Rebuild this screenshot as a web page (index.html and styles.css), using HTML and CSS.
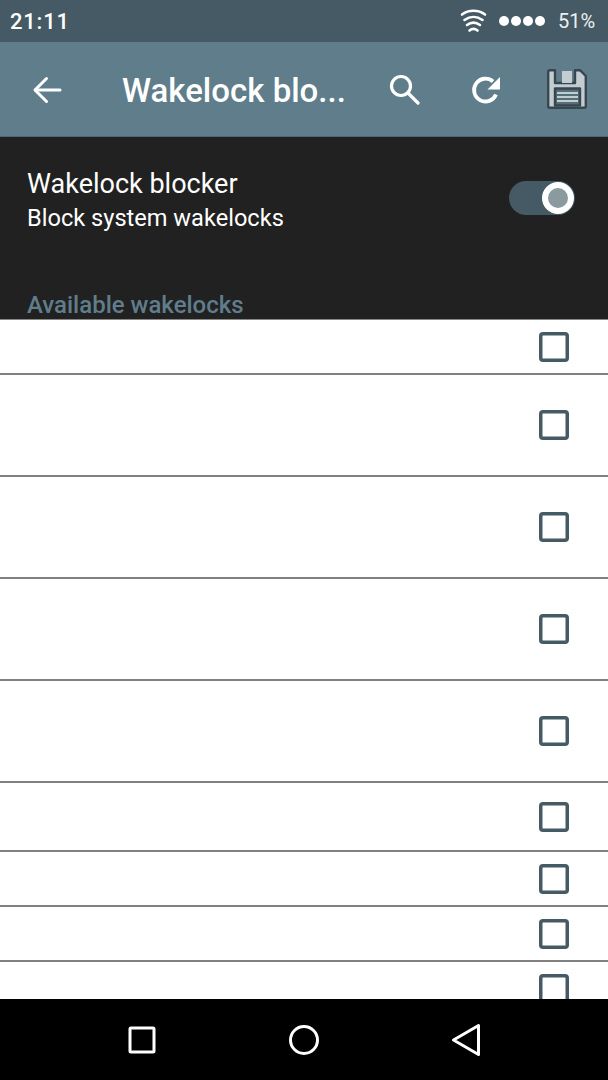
FILE: index.html
```html
<!DOCTYPE html>
<html lang="en">
<head>
	<meta charset="UTF-8">
	<title>Wakelock blocker</title>
	<link rel="stylesheet" href="styles.css">
</head>
<body>

<div id="wrapper">
	<div class="status_bar">
		<span class="clock">21:11</span>
		<svg class="wifi" width="27" height="24" viewBox="0 0 27 24" fill="none" stroke="#fff" stroke-width="2.6" stroke-linecap="round">
			<path d="M2 5.500C8.500 .5 18.500 .5 25 5.500"/>
			<path d="M4.500 11C10 7 17 7 22.500 11"/>
			<path d="M7 16C11 13 16 13 20 16"/>
			<path d="M9.500 21.500C12 19.500 15 19.500 17.500 21.500"/>
		</svg>
		<ul class="signal">
			<li></li>
			<li></li>
			<li></li>
			<li></li>
		</ul>
		<span class="battery">51%</span>
	</div>

	<div class="app_bar">
		<svg class="back" width="30" height="30" viewBox="0 0 30 30" fill="none" stroke="#fff" stroke-width="3" stroke-linecap="round" stroke-linejoin="round">
			<path d="M3.500 15H28"/>
			<path d="M14.500 3.500L3 15l11.500 11.500"/>
		</svg>
		<span class="title">Wakelock blo...</span>
		<svg class="search" width="32" height="32" viewBox="0 0 32 32" fill="none" stroke="#fff" stroke-width="3.200">
			<circle cx="13" cy="13" r="9.500"/>
			<path d="M20 20l10 10" stroke-linecap="round"/>
		</svg>
		<svg class="refresh" width="32" height="32" viewBox="0 0 32 32" fill="none">
			<path d="M26 20.500A11.400 11.400 0 1 1 23 7.500" stroke="#fff" stroke-width="3.800"/>
			<path d="M30 3V15.500H17.500z" fill="#fff"/>
		</svg>
		<svg class="save" width="40" height="40" viewBox="0 0 40 40" stroke="#37474f" stroke-width="2.400" stroke-linejoin="round">
			<path d="M2.500 1.200H8V14H28V1.200H33L38.800 7V37.300A1.500 1.500 0 0 1 37.300 38.800H2.700A1.500 1.500 0 0 1 1.200 37.300V2.500A1.500 1.500 0 0 1 2.500 1.200z" fill="#c3ccd0"/>
			<rect x="15" y="2" width="10" height="12" fill="#c3ccd0" stroke-width="0"/>
			<rect x="8" y="19.500" width="25" height="17" fill="#546e7a"/>
			<path d="M10 24H31M10 28H31M10 32H31" stroke="#c3ccd0" stroke-width="1.800"/>
		</svg>
	</div>

	<div class="panel">
		<div class="switch_row">
			<div class="switch_text">
				<div class="name">Wakelock blocker</div>
				<div class="desc">Block system wakelocks</div>
			</div>
			<div class="switch">
				<div class="thumb"></div>
			</div>
		</div>
		<div class="section">Available wakelocks</div>
	</div>

	<ul class="list">
		<li class="row_s"><span class="check"></span></li>
		<li class="row_l"><span class="check"></span></li>
		<li class="row_l"><span class="check"></span></li>
		<li class="row_l"><span class="check"></span></li>
		<li class="row_l"><span class="check"></span></li>
		<li class="row_m"><span class="check"></span></li>
		<li class="row_s"><span class="check"></span></li>
		<li class="row_s"><span class="check"></span></li>
		<li class="row_s"><span class="check"></span></li>
	</ul>

	<div class="nav_bar">
		<svg width="28" height="28" viewBox="0 0 28 28" fill="none" stroke="#fff" stroke-width="3" stroke-linejoin="round">
			<rect x="2" y="2" width="24" height="24" rx="1"/>
		</svg>
		<svg width="32" height="32" viewBox="0 0 32 32" fill="none" stroke="#fff" stroke-width="3">
			<circle cx="16" cy="16" r="13.500"/>
		</svg>
		<svg width="30" height="34" viewBox="0 0 30 34" fill="none" stroke="#fff" stroke-width="3" stroke-linejoin="round">
			<path d="M27.500 2.500V31.500L2.500 17z"/>
		</svg>
	</div>
</div>

</body>
</html>
```

FILE: styles.css
```css
*{
	margin: 0;
	padding: 0;
}
li{
	list-style: none;
}
body{
	font-family: Roboto, "Liberation Sans", sans-serif;
}

#wrapper{
	width: 608px;
	height: 1080px;
	display: flex;
	flex-direction: column;
	overflow: hidden;
	background: #fff;
}

/* status bar */
.status_bar{
	height: 42px;
	flex: none;
	display: flex;
	align-items: center;
	padding: 0 14px 0 10px;
	background: #455a64;
	color: #fff;
}
.clock{
	font-size: 22px;
	font-weight: 500;
	letter-spacing: 0.8px;
	margin-right: auto;
}
.wifi{
	margin-right: 12px;
}
.signal{
	display: flex;
	gap: 2px;
	margin-right: 13px;
}
.signal li{
	width: 10px;
	height: 10px;
	border-radius: 50%;
	background: #fff;
}
.battery{
	width: 36px;
	font-size: 20px;
	white-space: nowrap;
	color: #eceff1;
}

/* app bar */
.app_bar{
	height: 94px;
	flex: none;
	display: flex;
	align-items: center;
	padding: 0 21px 0 32px;
	background: #607d8b;
	border-bottom: 1px solid #4f6772;
}
.back{
	margin-top: 2px;
}
.title{
	width: 222px;
	margin: 2px 0 0 60px;
	font-size: 33px;
	font-weight: 500;
	color: #fff;
	white-space: nowrap;
}
.search{
	margin-left: 44px;
}
.refresh{
	margin: 2px 0 0 50px;
}
.save{
	margin-left: 45px;
}

/* dark panel */
.panel{
	height: 182px;
	flex: none;
	box-sizing: border-box;
	padding: 29px 33px 0 27px;
	background: #212121;
	color: #fff;
}
.switch_row{
	display: flex;
	align-items: flex-start;
	justify-content: space-between;
}
.name{
	font-size: 27px;
	line-height: 36px;
}
.desc{
	font-size: 23.6px;
	line-height: 32px;
}
.switch{
	width: 66px;
	height: 34px;
	margin-top: 15px;
	display: flex;
	align-items: center;
	justify-content: flex-end;
	border-radius: 17px;
	background: #455a64;
}
.thumb{
	width: 20px;
	height: 20px;
	border: 6px solid #fff;
	border-radius: 50%;
	background: #8a9a9f;
	margin-right: 1px;
}
.section{
	margin-top: 57px;
	font-size: 24px;
	font-weight: 500;
	color: #607d8b;
}

/* list */
.list{
	flex: 1;
	min-height: 0;
	overflow: hidden;
	border-top: 1px solid #888;
}
.list li{
	box-sizing: border-box;
	display: flex;
	align-items: center;
	justify-content: flex-end;
	padding-right: 39px;
	border-bottom: 2px solid #808080;
}
.row_s{
	height: 55px;
}
.row_m{
	height: 69px;
}
.row_l{
	height: 102px;
}
.check{
	width: 30px;
	height: 30px;
	flex: none;
	border-radius: 4px;
	box-shadow: inset 0 0 0 3.5px #455a64;
}

/* navigation */
.nav_bar{
	height: 81px;
	flex: none;
	display: flex;
	align-items: center;
	justify-content: space-between;
	padding: 0 127px 0 128px;
	background: #000;
}
```
